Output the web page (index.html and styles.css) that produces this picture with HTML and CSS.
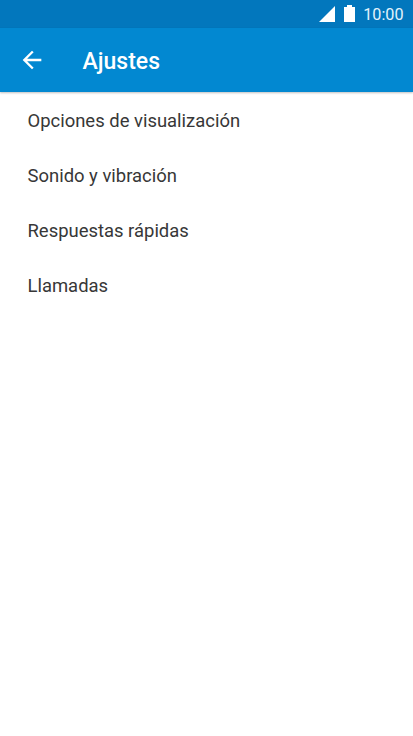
FILE: index.html
```html
<!DOCTYPE html>
<html lang="es">
<head>
    <meta charset="UTF-8">
    <meta name="viewport" content="width=device-width, initial-scale=1.0">
    <title>Ajustes</title>
    <link rel="stylesheet" href="styles.css">
</head>
<body>
    <div class="status-bar">
        <svg class="signal" viewBox="0 0 16 16"><path d="M16 0v16H0z"/></svg>
        <svg class="battery" viewBox="0 0 11 17"><path d="M3 0h5v2h3v15H0V2h3z"/></svg>
        <span class="clock">10:00</span>
    </div>

    <header class="app-bar">
        <svg class="back" viewBox="0 0 24 24"><path d="M20 11H7.83l5.59-5.59L12 4l-8 8 8 8 1.41-1.41L7.83 13H20v-2z"/></svg>
        <h1>Ajustes</h1>
    </header>

    <ul class="settings">
        <li>Opciones de visualización</li>
        <li>Sonido y vibración</li>
        <li>Respuestas rápidas</li>
        <li>Llamadas</li>
    </ul>
</body>
</html>
```
FILE: styles.css
```css
body {
    margin: 0;
    min-height: 100vh;
    background-color: #fff;
    font-family: Roboto, sans-serif;
}
.status-bar {
    display: flex;
    align-items: flex-start;
    justify-content: flex-end;
    height: 28px;
    padding-right: 9.5px;
    box-sizing: border-box;
    background-color: #0277bd;
    color: #e1f3fc;
}
.status-bar svg {
    fill: #fff;
}
.signal {
    width: 16px;
    height: 16px;
    margin: 6px 9px 0 0;
}
.battery {
    width: 11px;
    height: 17px;
    margin: 5px 8px 0 0;
}
.clock {
    font-size: 16.2px;
    line-height: 29px;
}
.app-bar {
    display: flex;
    align-items: center;
    height: 64px;
    padding-left: 18px;
    background-color: #0288d1;
    box-shadow: 0 1px 2px rgba(0, 0, 0, 0.25);
    color: #fff;
}
.back {
    width: 28px;
    height: 28px;
    margin: 0 36.5px 1px 0;
    fill: #fff;
}
.app-bar h1 {
    margin: 0;
    padding-top: 2px;
    font-size: 23px;
    font-weight: 500;
}
.settings {
    margin: 0;
    padding: 2px 0 0;
    list-style: none;
}
.settings li {
    height: 55px;
    padding-left: 27.5px;
    line-height: 55px;
    font-size: 18.45px;
    color: #373737;
}
```
